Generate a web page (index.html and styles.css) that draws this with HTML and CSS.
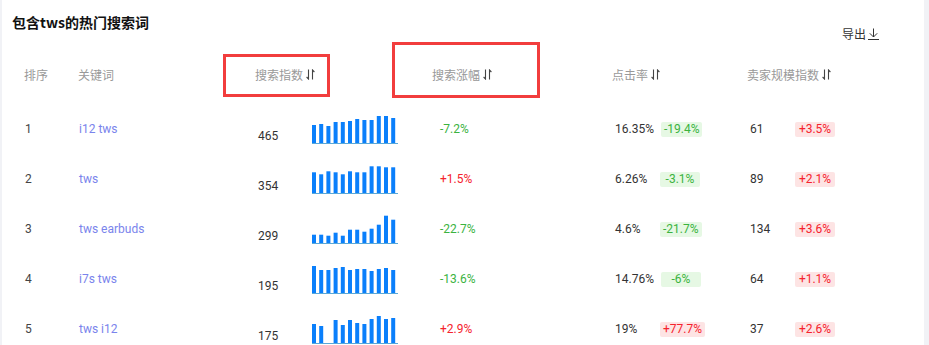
FILE: index.html
```html
<!DOCTYPE html>
<html lang="zh">
<head>
<meta charset="utf-8">
<link rel="stylesheet" href="styles.css">
</head>
<body>
<div class="page">
  <div class="topbar">
    <h2 class="title">包含tws的热门搜索词</h2>
    <div class="export">导出<svg class="export-icon" width="11" height="12" viewBox="0 0 11 12"><path d="M5.5 0.5V9M1.8 5.3L5.5 9L9.2 5.3M0 11.5H11" fill="none" stroke="#333" stroke-width="1"/></svg></div>
  </div>

  <div class="head">
    <div class="h-rank">排序</div>
    <div class="h-kw">关键词</div>
    <div class="h-idx">搜索指数<svg class="sort" width="9" height="11" viewBox="0 0 9 11"><path d="M2.5 0.5V10L0.6 8" fill="none" stroke="#444" stroke-width="1.1"/><path d="M6.5 10.5V1L8.4 3" fill="none" stroke="#444" stroke-width="1.1"/></svg></div>
    <div class="h-chg">搜索涨幅<svg class="sort" width="9" height="11" viewBox="0 0 9 11"><path d="M2.5 0.5V10L0.6 8" fill="none" stroke="#444" stroke-width="1.1"/><path d="M6.5 10.5V1L8.4 3" fill="none" stroke="#444" stroke-width="1.1"/></svg></div>
    <div class="h-ctr">点击率<svg class="sort" width="9" height="11" viewBox="0 0 9 11"><path d="M2.5 0.5V10L0.6 8" fill="none" stroke="#444" stroke-width="1.1"/><path d="M6.5 10.5V1L8.4 3" fill="none" stroke="#444" stroke-width="1.1"/></svg></div>
    <div class="h-sel">卖家规模指数<svg class="sort" width="9" height="11" viewBox="0 0 9 11"><path d="M2.5 0.5V10L0.6 8" fill="none" stroke="#444" stroke-width="1.1"/><path d="M6.5 10.5V1L8.4 3" fill="none" stroke="#444" stroke-width="1.1"/></svg></div>
  </div>

  <div class="rows" id="rows"></div>

  <div class="mark mark-1"></div>
  <div class="mark mark-2"></div>
</div>
<script>
var data = [
  {r:1, kw:"i12 tws", idx:465, bars:[18,19,17,21,21,22,24,23,23,27,27,25], chg:"-7.2%", ctr:"16.35%", ctrc:"-19.4%", sel:61, selc:"+3.5%"},
  {r:2, kw:"tws", idx:354, bars:[20.7,18.7,21.7,20.7,18.7,21.7,20.7,20.7,26.7,26.7,25.7,25.7], chg:"+1.5%", ctr:"6.26%", ctrc:"-3.1%", sel:89, selc:"+2.1%"},
  {r:3, kw:"tws earbuds", idx:299, bars:[8.3,8.3,7.3,10.3,7.3,13.3,13.3,11.3,14.3,18.3,27.3,23.3], chg:"-22.7%", ctr:"4.6%", ctrc:"-21.7%", sel:134, selc:"+3.6%"},
  {r:4, kw:"i7s tws", idx:195, bars:[27,23,23,25,26,23,24,24,22,24,25,23], chg:"-13.6%", ctr:"14.76%", ctrc:"-6%", sel:64, selc:"+1.1%"},
  {r:5, kw:"tws i12", idx:175, bars:[19,17,0,23,18,23,20,19,24,27,24,25], chg:"+2.9%", ctr:"19%", ctrc:"+77.7%", sel:37, selc:"+2.6%"}
];
function cls(v){ return v.charAt(0) === "-" ? "down" : "up"; }
var html = "";
data.forEach(function(d){
  var bars = "";
  d.bars.forEach(function(h, i){
    if (h > 0) bars += '<rect x="' + (i * 7.2).toFixed(1) + '" y="' + (28 - h).toFixed(1) + '" width="4" height="' + h + '" fill="#0a7ffb"/>';
  });
  html += '<div class="row">' +
    '<div class="c-rank">' + d.r + '</div>' +
    '<div class="c-kw">' + d.kw + '</div>' +
    '<div class="c-idx">' + d.idx + '</div>' +
    '<div class="c-chart"><svg width="86" height="29" viewBox="0 0 86 29">' + bars + '<rect x="0" y="28" width="86" height="1" fill="#5aa8d8"/></svg></div>' +
    '<div class="c-chg ' + cls(d.chg) + '">' + d.chg + '</div>' +
    '<div class="c-ctr"><span class="num">' + d.ctr + '</span><span class="badge ' + cls(d.ctrc) + '">' + d.ctrc + '</span></div>' +
    '<div class="c-sel"><span class="num">' + d.sel + '</span><span class="badge ' + cls(d.selc) + '">' + d.selc + '</span></div>' +
    '</div>';
});
document.getElementById("rows").innerHTML = html;
</script>
</body>
</html>
```
FILE: styles.css
```css
html, body {
  margin: 0;
  padding: 0;
  background: #f1f2f6;
}
body {
  font-family: Roboto, "Noto Sans CJK SC", sans-serif;
  font-size: 12px;
  color: #333;
}
.page {
  position: relative;
  margin-left: 2px;
  width: 922px;
  height: 345px;
  background: #fff;
  overflow: hidden;
}
.topbar {
  display: flex;
  justify-content: space-between;
  align-items: flex-start;
  padding: 12px 45px 0 10px;
}
.title {
  margin: 0;
  font-size: 14px;
  line-height: 20px;
  font-weight: bold;
  color: #111;
  font-family: "Noto Sans CJK SC", sans-serif;
}
.export {
  margin-top: 14px;
  display: flex;
  align-items: center;
  gap: 2px;
  font-size: 12px;
  line-height: 16px;
  color: #333;
  font-family: "Noto Sans CJK SC", sans-serif;
}
.export-icon { display: block; }

.head {
  display: grid;
  grid-template-columns: 54px 177px 177px 180px 135px 1fr;
  align-items: center;
  height: 34px;
  margin-top: 15px;
  padding-left: 22px;
  color: #999;
  font-size: 12px;
  font-family: "Noto Sans CJK SC", sans-serif;
}
.head > div {
  display: flex;
  align-items: center;
  gap: 3px;
}
.sort { display: block; }

.rows {
  margin-top: 13px;
  padding-left: 23px;
}
.row {
  display: grid;
  grid-template-columns: 54px 179px 54px 128px 175px 135px 1fr;
  align-items: center;
  height: 50px;
}
.c-rank { color: #444; }
.c-kw { color: #7a84ec; }
.c-idx {
  align-self: center;
  padding-top: 14px;
  color: #333;
}
.c-chart svg { display: block; }
.c-chg.down { color: #3bb33f; }
.c-chg.up { color: #f5222d; }

.c-ctr, .c-sel {
  display: flex;
  align-items: center;
}
.c-ctr .num { min-width: 38px; margin-right: 7px; color: #333; }
.c-sel .num { min-width: 45px; color: #333; }
.badge {
  display: inline-block;
  min-width: 40px;
  height: 15px;
  line-height: 15px;
  padding: 0 3px;
  box-sizing: border-box;
  text-align: center;
  border-radius: 2px;
}
.badge.down { background: #e6f8e4; color: #3bb33f; }
.badge.up { background: #fde4e4; color: #f5222d; }

.mark {
  position: absolute;
  border: 3px solid #f23d3d;
  box-sizing: border-box;
}
.mark-1 { left: 221px; top: 54px; width: 107px; height: 43px; }
.mark-2 { left: 390px; top: 42px; width: 148px; height: 56px; }
```
